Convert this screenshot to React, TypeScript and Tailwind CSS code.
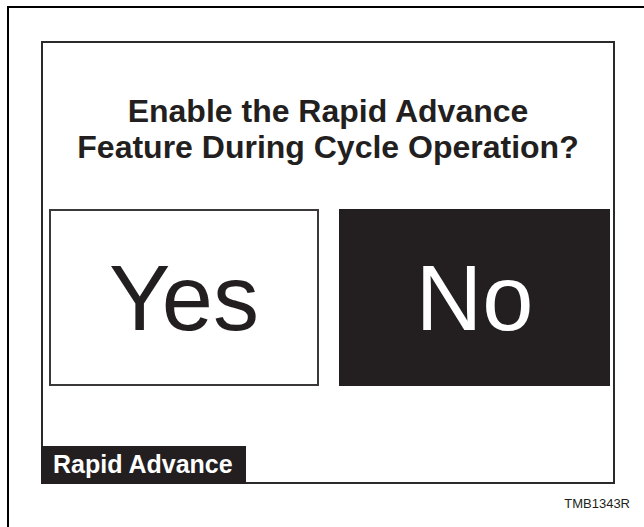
import React from "react";

const App: React.FC = () => {
  return (
    <div
      className="h-[527px] w-[644px] overflow-hidden bg-white"
      style={{ fontFamily: '"Liberation Sans", Arial, sans-serif' }}
    >
      {/* outer frame, only top + left edges are visible */}
      <div className="ml-[7px] mt-[6px] h-[540px] w-[660px] border-l-2 border-t-2 border-black">
        <div className="ml-[32px] mt-[33px] flex h-[443px] w-[574px] flex-col border-2 border-[#2b2a2a]">
          {/* Question */}
          <h2 className="mt-[50px] text-center text-[32px] font-bold leading-[36px] text-[#231f20]">
            Enable the Rapid Advance
            <br />
            Feature During Cycle Operation?
          </h2>

          {/* Choice buttons */}
          <div className="mt-[44px] flex gap-[20px] pl-[6px]">
            <button className="flex h-[177px] w-[270px] items-center justify-center border-2 border-[#3a3838] bg-white text-[92px] text-[#231f20]">
              Yes
            </button>
            <button className="flex h-[177px] w-[271px] items-center justify-center bg-[#231f20] text-[92px] text-white">
              No
            </button>
          </div>

          {/* Status tab */}
          <div className="mt-auto -mb-[2px] -ml-[2px] flex h-[38px] w-[205px] items-center bg-[#231f20] pl-[12px] text-[25px] font-bold text-white">
            Rapid Advance
          </div>
        </div>
      </div>

      <div className="-mt-[52px] pr-[14px] text-right text-[13px] text-[#231f20]">
        TMB1343R
      </div>
    </div>
  );
};

export default App;
